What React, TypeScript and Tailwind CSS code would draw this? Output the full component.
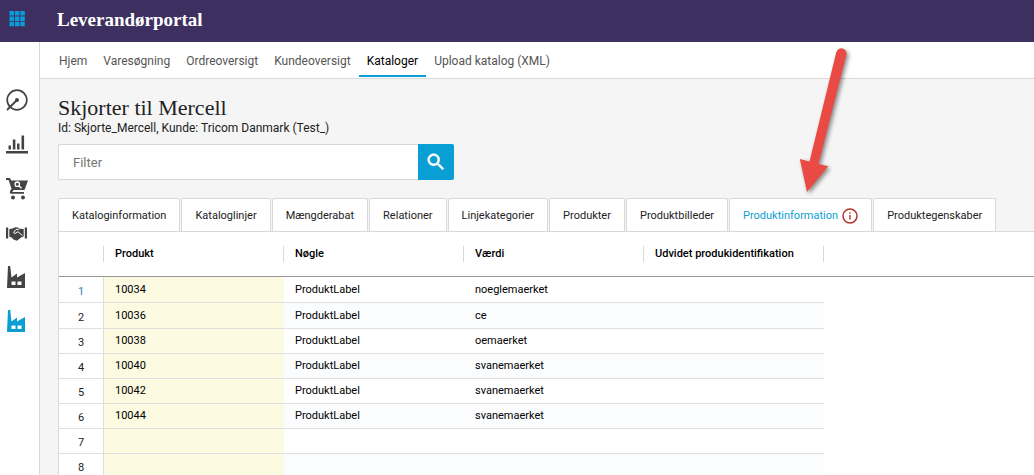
import { useState, type ReactNode } from "react";

const navItems = [
  "Hjem",
  "Varesøgning",
  "Ordreoversigt",
  "Kundeoversigt",
  "Kataloger",
  "Upload katalog (XML)",
];

const tabs = [
  "Kataloginformation",
  "Kataloglinjer",
  "Mængderabat",
  "Relationer",
  "Linjekategorier",
  "Produkter",
  "Produktbilleder",
  "Produktinformation",
  "Produktegenskaber",
];

const columns = ["Produkt", "Nøgle", "Værdi", "Udvidet produkidentifikation"];

const rows = [
  ["10034", "ProduktLabel", "noeglemaerket", ""],
  ["10036", "ProduktLabel", "ce", ""],
  ["10038", "ProduktLabel", "oemaerket", ""],
  ["10040", "ProduktLabel", "svanemaerket", ""],
  ["10042", "ProduktLabel", "svanemaerket", ""],
  ["10044", "ProduktLabel", "svanemaerket", ""],
  ["", "", "", ""],
  ["", "", "", ""],
];

const factory = (
  <path
    fillRule="evenodd"
    d="M3 2h2.200l1.300 11.500L12 9.500v4l8-4.500V24H2zM6.500 17.500v3.500h4v-3.500zm6 0v3.500h4v-3.500z"
  />
);

const sideIcons: { label: string; active?: boolean; icon: ReactNode }[] = [
  {
    label: "Dashboard",
    icon: (
      <>
        <circle cx="12" cy="12" r="9.800" fill="none" stroke="currentColor" strokeWidth="1.700" />
        <circle cx="12" cy="12" r="2" />
        <path d="M12 12L2.500 21.500" stroke="currentColor" strokeWidth="1.800" strokeLinecap="round" />
      </>
    ),
  },
  {
    label: "Statistik",
    icon: (
      <path d="M1 19h22v2.500H1zM3.500 13.500h2.500v4H3.500zM7.800 7.500h2.600v10H7.800zM12 11.500h2.500v6H12zM16.500 3.500h2.600v14h-2.600z" />
    ),
  },
  {
    label: "Indkøb",
    icon: (
      <>
        <path d="M1 2h4l1.200 2.500H23L19.500 14H8.500l-1.200 2H19v1.800H6q-1.800-.6-1-2.600l1.500-2.400L3.600 4H1z" />
        <circle cx="8" cy="21.500" r="2" />
        <circle cx="18" cy="21.500" r="2" />
        <circle cx="12.300" cy="8.200" r="2.200" fill="none" stroke="#fff" strokeWidth="1.300" />
        <path d="M14 10l2.500 2.300" stroke="#fff" strokeWidth="1.500" />
      </>
    ),
  },
  {
    label: "Aftaler",
    icon: (
      <>
        <path d="M1 7.500h2.200v11H1zM19.800 7.500H22v11h-2.200zM4.300 9l3-.5 3-1.200 2.500.2 2.500 1.200 3.400.3v7.500l-2.500 1-4.300 3.200L8.500 19.500l-2-2-2.200-.8z" />
        <path d="M14.500 9l-3.500.5-2.500 3 1.500 1 3-1.800 4.500 4" fill="none" stroke="#fff" strokeWidth="1" />
      </>
    ),
  },
  { label: "Leverandør", icon: factory },
  { label: "Leverandørportal", active: true, icon: factory },
];

function InfoIcon() {
  return (
    <svg viewBox="0 0 16 16" className="h-4 w-4 shrink-0" fill="none" aria-hidden="true">
      <circle cx="8" cy="8" r="7" stroke="#b5302c" strokeWidth="1.500" />
      <path d="M8 7v4.500M8 4.300v1.400" stroke="#b5302c" strokeWidth="1.400" />
    </svg>
  );
}

function Arrow() {
  return (
    <svg
      viewBox="0 0 50 150"
      className="pointer-events-none absolute left-[798px] top-[46px] h-[150px] w-[50px] drop-shadow-[2px_2px_2px_rgba(0,0,0,0.45)]"
      aria-hidden="true"
    >
      <path
        d="M38.200 6.500a5.200 5.200 0 0 1 10.200 2.200L20.500 118l9.700 2.300L9 146 1.800 113l9.700 2.600z"
        fill="#e94b44"
      />
    </svg>
  );
}

export default function App() {
  const [activeNav, setActiveNav] = useState("Kataloger");
  const [activeTab, setActiveTab] = useState("Produktinformation");
  const [filter, setFilter] = useState("");

  const visible = rows.filter(
    (row) =>
      !filter ||
      row.some((cell) => cell.toLowerCase().includes(filter.toLowerCase()))
  );

  return (
    <div className="relative flex h-screen flex-col overflow-hidden bg-[#f5f5f5] font-[Roboto,sans-serif] text-[#222]">
      <header className="flex h-[42px] shrink-0 items-center bg-[#3d3060] text-white">
        <button aria-label="Menu" className="flex h-full w-10 items-center pl-[9px] pb-1 text-[#0a9bd8]">
          <svg viewBox="0 0 16 16" className="h-4 w-4" fill="currentColor" aria-hidden="true">
            <path d="M0.500 0h4.500v4.500H0.500zM5.900 0h4.500v4.500H5.900zM11.300 0h4.500v4.500h-4.500zM0.500 5.400h4.500v4.500H0.500zM5.900 5.400h4.500v4.500H5.900zM11.300 5.400h4.500v4.500h-4.500zM0.500 10.800h4.500v4.500H0.500zM5.900 10.800h4.500v4.500H5.900zM11.300 10.800h4.500v4.500h-4.500z" />
          </svg>
        </button>
        <span className="pb-0.5 pl-[17px] font-['Liberation_Serif',serif] text-[19px] font-bold">
          Leverandørportal
        </span>
      </header>

      <div className="flex min-h-0 flex-1">
        <aside className="flex w-10 shrink-0 flex-col gap-5 border-r border-[#d9d9d9] bg-white pl-[5px] pt-[46px]">
          {sideIcons.map((item) => (
            <a
              key={item.label}
              href="#"
              aria-label={item.label}
              className={item.active ? "text-[#0a9fd4]" : "text-[#444]"}
            >
              <svg viewBox="0 0 24 24" className="h-6 w-6" fill="currentColor" aria-hidden="true">
                {item.icon}
              </svg>
            </a>
          ))}
        </aside>

        <main className="min-w-0 flex-1">
          <nav className="flex h-[37px] border-b border-[#d9d9d9] bg-white pl-[11px] text-xs">
            {navItems.map((item) => (
              <a
                key={item}
                href="#"
                onClick={() => setActiveNav(item)}
                className={`flex h-[35px] items-center whitespace-nowrap border-b-2 px-2 pt-1 ${
                  item === activeNav
                    ? "border-[#0a9fd4] text-black"
                    : "border-transparent text-[#555]"
                }`}
              >
                {item}
              </a>
            ))}
          </nav>

          <div className="pl-[18px] pt-[17px]">
            <h1 className="font-['Liberation_Serif',serif] text-[22px] leading-6">
              Skjorter til Mercell
            </h1>
            <p className="text-xs leading-4">
              Id: Skjorte_Mercell, Kunde: Tricom Danmark (Test_)
            </p>

            <form
              className="mt-2 flex h-9 max-w-[396px]"
              onSubmit={(e) => e.preventDefault()}
            >
              <input
                type="text"
                aria-label="Filter"
                placeholder="Filter"
                value={filter}
                onChange={(e) => setFilter(e.target.value)}
                className="min-w-0 flex-1 rounded-l-xs border border-r-0 border-[#d9d9d9] bg-white px-[14px] pt-0.5 text-[13px] outline-none placeholder:text-[#757575]"
              />
              <button
                aria-label="Søg"
                className="flex w-9 items-center justify-center rounded-r-xs bg-[#0a9fd4] text-white"
              >
                <svg viewBox="0 0 24 24" className="h-[22px] w-[22px]" fill="currentColor" aria-hidden="true">
                  <path
                    d="M15.500 14h-.8l-.3-.3A6.500 6.500 0 1 0 13.700 14.400l.3.3v.8l5 5 1.500-1.500zm-6 0a4.500 4.500 0 1 1 0-9 4.500 4.500 0 0 1 0 9z"
                    stroke="currentColor"
                    strokeWidth="0.700"
                  />
                </svg>
              </button>
            </form>

            <div role="tablist" className="mt-[18px] flex h-[33px] gap-px text-[11px]">
              {tabs.map((tab) => (
                <button
                  key={tab}
                  role="tab"
                  aria-selected={tab === activeTab}
                  onClick={() => setActiveTab(tab)}
                  className={`flex items-center gap-1 whitespace-nowrap rounded-t-xs border border-b-0 border-[#d9d9d9] bg-white px-[13px] pt-0.5 ${
                    tab === activeTab ? "text-[#0a9fd4]" : ""
                  }`}
                >
                  {tab}
                  {tab === "Produktinformation" && <InfoIcon />}
                </button>
              ))}
            </div>

            <div className="border-l border-t border-[#d9d9d9] bg-white">
              <table className="w-full table-fixed border-separate border-spacing-0 text-[11px] text-black">
                <colgroup>
                  <col className="w-[45px]" />
                  {columns.map((col) => (
                    <col key={col} className="w-[180px]" />
                  ))}
                  <col />
                </colgroup>
                <thead>
                  <tr className="h-[45px] text-left">
                    <td className="border-b border-[#999] p-0">
                      <div className="h-4 border-r border-[#d9d9d9]" />
                    </td>
                    {columns.map((col) => (
                      <th key={col} scope="col" className="border-b border-[#999] p-0 font-medium">
                        <div className="h-4 whitespace-nowrap border-r border-[#d9d9d9] pl-[11px] leading-4">
                          {col}
                        </div>
                      </th>
                    ))}
                    <td className="border-b border-[#999] p-0" />
                  </tr>
                </thead>
                <tbody>
                  {visible.map((row, i) => (
                    <tr key={i} className="h-[25px] nth-[-n+2]:h-[26px] even:bg-[#fbfcfe]">
                      <th
                        scope="row"
                        className={`border-b border-r border-[#dfdfdf] bg-white p-0 pt-1 text-center font-normal leading-4 ${
                          i === 0 ? "text-[#2f7fb5]" : "text-[#222]"
                        }`}
                      >
                        {i + 1}
                      </th>
                      {row.map((cell, c) => (
                        <td
                          key={c}
                          className={`border-b border-[#dfdfdf] p-0 pl-[11px] leading-4 ${
                            c === 0 ? "bg-[#fcfae0]" : ""
                          }`}
                        >
                          {cell}
                        </td>
                      ))}
                      <td className="bg-white" />
                    </tr>
                  ))}
                </tbody>
              </table>
            </div>
          </div>
        </main>
      </div>

      <Arrow />
    </div>
  );
}
